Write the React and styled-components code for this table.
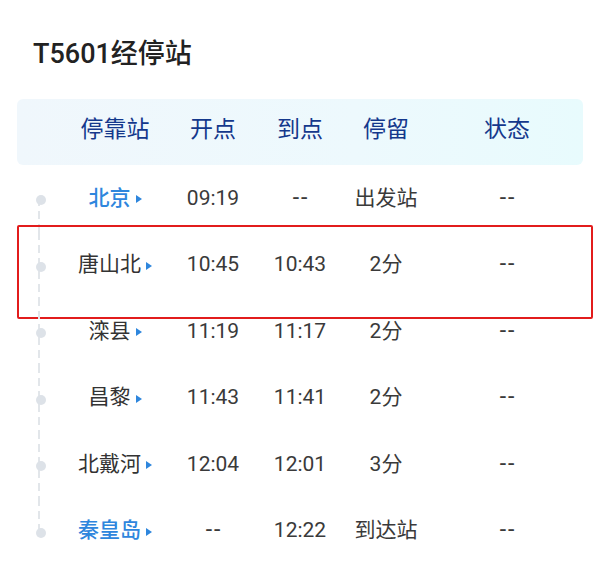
import React from 'react'
import styled, { createGlobalStyle } from 'styled-components'

const GlobalStyle = createGlobalStyle`
  body {
    margin: 0;
    background: #fff;
    font-family: Roboto, "Noto Sans CJK SC", sans-serif;
  }
`

const STOPS = [
  { name: '北京', depart: '09:19', arrive: '--', stay: '出发站', state: '--', blue: true },
  { name: '唐山北', depart: '10:45', arrive: '10:43', stay: '2分', state: '--', marked: true },
  { name: '滦县', depart: '11:19', arrive: '11:17', stay: '2分', state: '--' },
  { name: '昌黎', depart: '11:43', arrive: '11:41', stay: '2分', state: '--' },
  { name: '北戴河', depart: '12:04', arrive: '12:01', stay: '3分', state: '--' },
  { name: '秦皇岛', depart: '--', arrive: '12:22', stay: '到达站', state: '--', blue: true },
]

function App() {
  return (
    <Page>
      <GlobalStyle />
      <Title>T5601经停站</Title>
      <Header>
        <span />
        <HeadCell>停靠站</HeadCell>
        <HeadCell>开点</HeadCell>
        <HeadCell>到点</HeadCell>
        <HeadCell>停留</HeadCell>
        <HeadCell>状态</HeadCell>
      </Header>
      {STOPS.map((s, i) => (
        <Row key={s.name}>
          <Track $first={i === 0} $last={i === STOPS.length - 1}>
            <Dot />
          </Track>
          <Station $blue={s.blue}>
            {s.name}
            <Arrow />
          </Station>
          {[s.depart, s.arrive, s.stay, s.state].map((v, j) => (
            <Cell key={j} $dash={v === '--'}>{v}</Cell>
          ))}
          {s.marked && <Mark />}
        </Row>
      ))}
    </Page>
  )
}

export default App

const Page = styled.div`
  width: 600px;
  height: 564px;
  padding: 40px 0 0 17px;
  box-sizing: border-box;
  overflow: hidden;
`

const Title = styled.h1`
  margin: 0 0 31px 16px;
  font-size: 27px;
  line-height: 28px;
  font-weight: 500;
  color: #222;
`

const cols = '48px 100px 96px 78px 94px 148px'

const Header = styled.div`
  display: grid;
  grid-template-columns: ${cols};
  align-items: center;
  width: 566px;
  height: 66px;
  border-radius: 6px;
  background: linear-gradient(90deg, #f0f7fc 0%, #edf9fd 60%, #e8fbfd 100%);
`

const HeadCell = styled.div`
  text-align: center;
  font-size: 23px;
  color: #14388c;
  margin-top: -10px;
`

const Row = styled.div`
  position: relative;
  display: grid;
  grid-template-columns: ${cols};
  align-items: center;
  width: 564px;
  height: 66.5px;
`

const Track = styled.div`
  position: relative;
  height: 100%;
  display: flex;
  align-items: center;
  justify-content: center;
  &::before {
    content: '';
    position: absolute;
    left: 21px;
    width: 1.5px;
    top: ${p => (p.$first ? '50%' : '0')};
    bottom: ${p => (p.$last ? '50%' : '0')};
    background: repeating-linear-gradient(180deg, #e2e6ea 0 8px, transparent 8px 13px);
  }
`

const Dot = styled.span`
  position: relative;
  width: 10px;
  height: 10px;
  margin-top: 4px;
  border-radius: 50%;
  background: #dde2e8;
`

const Station = styled.div`
  display: flex;
  align-items: center;
  justify-content: center;
  gap: 5px;
  margin-top: -1px;
  font-size: 21px;
  line-height: 30px;
  color: ${p => (p.$blue ? '#2e86dd' : '#333')};
  font-weight: ${p => (p.$blue ? 500 : 400)};
`

const Arrow = styled.span`
  width: 0;
  height: 0;
  margin-top: 3px;
  border-top: 4.5px solid transparent;
  border-bottom: 4.5px solid transparent;
  border-left: 6px solid #2e86dd;
`

const Cell = styled.div`
  text-align: center;
  font-size: ${p => (p.$dash ? '23px' : '21px')};
  line-height: 30px;
  color: #3a3a3a;
  margin-top: -1px;
  letter-spacing: ${p => (p.$dash ? '2px' : '0')};
  text-indent: ${p => (p.$dash ? '2px' : '0')};
`

const Mark = styled.div`
  position: absolute;
  left: 0;
  right: -12px;
  top: -7px;
  bottom: -21px;
  border: 2.5px solid #e21c1c;
  border-radius: 2px;
  pointer-events: none;
`
